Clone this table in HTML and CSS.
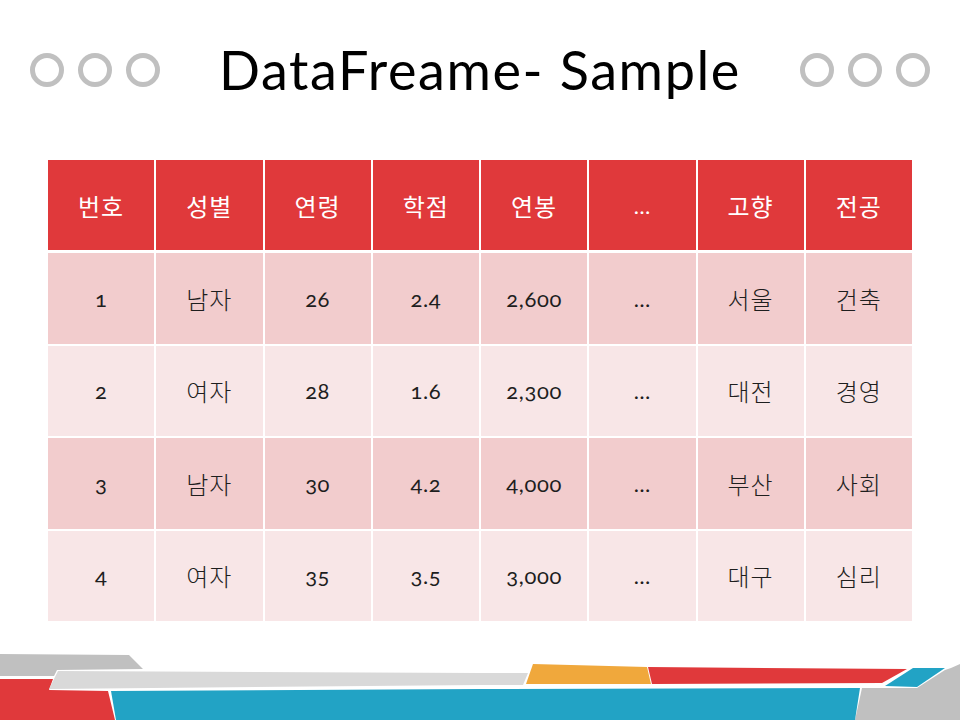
FILE: index.html
```html
<!DOCTYPE html>
<html lang="ko">
<head>
<meta charset="utf-8">
<title>DataFreame- Sample</title>
<link rel="stylesheet" href="styles.css">
</head>
<body>
<div class="slide">
  <header class="top">
    <div class="rings left">
      <span class="ring"></span><span class="ring"></span><span class="ring"></span>
    </div>
    <h1 class="title">DataFreame- Sample</h1>
    <div class="rings right">
      <span class="ring"></span><span class="ring"></span><span class="ring"></span>
    </div>
  </header>

  <div class="grid">
    <div class="cell head">번호</div>
    <div class="cell head">성별</div>
    <div class="cell head">연령</div>
    <div class="cell head">학점</div>
    <div class="cell head">연봉</div>
    <div class="cell head dots">…</div>
    <div class="cell head">고향</div>
    <div class="cell head">전공</div>

    <div class="cell odd num">1</div>
    <div class="cell odd">남자</div>
    <div class="cell odd num">26</div>
    <div class="cell odd num">2.4</div>
    <div class="cell odd num">2,600</div>
    <div class="cell odd num">…</div>
    <div class="cell odd">서울</div>
    <div class="cell odd">건축</div>

    <div class="cell even num">2</div>
    <div class="cell even">여자</div>
    <div class="cell even num">28</div>
    <div class="cell even num">1.6</div>
    <div class="cell even num">2,300</div>
    <div class="cell even num">…</div>
    <div class="cell even">대전</div>
    <div class="cell even">경영</div>

    <div class="cell odd num">3</div>
    <div class="cell odd">남자</div>
    <div class="cell odd num">30</div>
    <div class="cell odd num">4.2</div>
    <div class="cell odd num">4,000</div>
    <div class="cell odd num">…</div>
    <div class="cell odd">부산</div>
    <div class="cell odd">사회</div>

    <div class="cell even num">4</div>
    <div class="cell even">여자</div>
    <div class="cell even num">35</div>
    <div class="cell even num">3.5</div>
    <div class="cell even num">3,000</div>
    <div class="cell even num">…</div>
    <div class="cell even">대구</div>
    <div class="cell even">심리</div>
  </div>

  <svg class="footer" width="960" height="80" viewBox="0 640 960 80" aria-hidden="true">
    <polygon fill="#c0c0c0" points="0,654 129,655 143,669 57,670 54,676 0,676"/>
    <polygon fill="#e0393b" points="0,679 53,679 49,690 108,691 115,720 0,720"/>
    <polygon fill="#d9d9d9" points="58,671 480,673 528,673 523,685 480,685 49,689"/>
    <polygon fill="#f0a83c" points="533,664 647,667 651,684 526,684"/>
    <polygon fill="#e0393b" points="648,667 907,669 882,683 652,684"/>
    <polygon fill="#22a3c5" points="913,668 945,668 917,687 885,686"/>
    <polygon fill="#c0c0c0" points="951,668 960,664 960,720 855,720 862,688 917,688 945,670"/>
    <polygon fill="#22a3c5" points="111,691 480,689 860,688 855,720 116,720"/>
  </svg>
</div>
</body>
</html>
```

FILE: styles.css
```css
html, body {
  margin: 0;
  padding: 0;
  background: #ffffff;
}

.slide {
  position: relative;
  width: 960px;
  height: 720px;
  overflow: hidden;
  font-family: Lato, "Noto Sans CJK KR", sans-serif;
}

.top {
  display: flex;
  align-items: center;
  justify-content: space-between;
  height: 60px;
  padding: 40px 30px 0 30px;
}

.rings {
  display: flex;
  gap: 14px;
}

.ring {
  width: 24px;
  height: 24px;
  border: 5px solid #c0c0c0;
  border-radius: 50%;
}

.title {
  margin: 0;
  font-family: Lato, sans-serif;
  font-weight: 400;
  font-size: 54px;
  line-height: 60px;
  color: #000000;
  letter-spacing: 1.6px;
}

.grid {
  display: grid;
  grid-template-columns: repeat(8, 1fr);
  grid-template-rows: 91px repeat(4, 90.5px);
  column-gap: 2px;
  row-gap: 2px;
  width: 864px;
  margin: 60px 0 0 48px;
}

.cell {
  display: flex;
  align-items: center;
  justify-content: center;
  font-family: "Noto Sans CJK KR", sans-serif;
  font-weight: 300;
  font-size: 24px;
  letter-spacing: 1px;
  color: #1e1e1e;
}

.cell.num,
.cell.dots {
  font-family: Lato, "Noto Sans CJK KR", sans-serif;
  font-weight: 400;
  font-size: 22px;
  letter-spacing: 0.6px;
  font-variant-numeric: oldstyle-nums;
}

.head {
  background: #e0393b;
  color: #ffffff;
  font-weight: 400;
  margin-bottom: 1px;
}

.odd {
  background: #f2cccd;
}

.even {
  background: #f8e6e7;
}

.footer {
  position: absolute;
  left: 0;
  top: 640px;
  display: block;
}
```
